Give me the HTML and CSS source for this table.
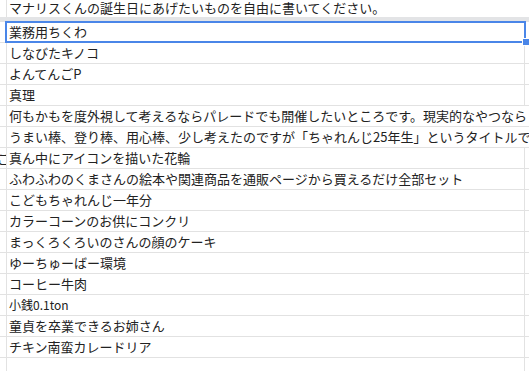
FILE: index.html
```html
<!DOCTYPE html>
<html lang="ja">
<head>
<meta charset="utf-8">
<title>Sheet</title>
<link rel="stylesheet" href="styles.css">
</head>
<body>
<div class="sheet">
  <div class="row head">
    <div class="c0"></div>
    <div class="c1 ov"><span>マナリスくんの誕生日にあげたいものを自由に書いてください。</span></div>
    <div class="c2"></div>
  </div>
  <div class="band"></div>
  <div class="row sel">
    <div class="c0"></div>
    <div class="c1"><span>業務用ちくわ</span></div>
    <div class="c2"></div>
  </div>
  <div class="row"><div class="c0"></div><div class="c1"><span>しなびたキノコ</span></div><div class="c2"></div></div>
  <div class="row"><div class="c0"></div><div class="c1"><span>よんてんごP</span></div><div class="c2"></div></div>
  <div class="row"><div class="c0"></div><div class="c1"><span>真理</span></div><div class="c2"></div></div>
  <div class="row"><div class="c0"></div><div class="c1 ov"><span>何もかもを度外視して考えるならパレードでも開催したいところです。現実的なやつなら</span></div><div class="c2"></div></div>
  <div class="row"><div class="c0"></div><div class="c1 ov"><span>うまい棒、登り棒、用心棒、少し考えたのですが「ちゃれんじ25年生」というタイトルで</span></div><div class="c2"></div></div>
  <div class="row"><div class="c0"><span>ご</span></div><div class="c1"><span>真ん中にアイコンを描いた花輪</span></div><div class="c2"></div></div>
  <div class="row"><div class="c0"></div><div class="c1"><span>ふわふわのくまさんの絵本や関連商品を通販ページから買えるだけ全部セット</span></div><div class="c2"></div></div>
  <div class="row"><div class="c0"></div><div class="c1"><span>こどもちゃれんじ一年分</span></div><div class="c2"></div></div>
  <div class="row"><div class="c0"></div><div class="c1"><span>カラーコーンのお供にコンクリ</span></div><div class="c2"></div></div>
  <div class="row"><div class="c0"></div><div class="c1"><span>まっくろくろいのさんの顔のケーキ</span></div><div class="c2"></div></div>
  <div class="row"><div class="c0"></div><div class="c1"><span>ゆーちゅーばー環境</span></div><div class="c2"></div></div>
  <div class="row"><div class="c0"></div><div class="c1"><span>コーヒー牛肉</span></div><div class="c2"></div></div>
  <div class="row"><div class="c0"></div><div class="c1 small"><span>小銭0.1ton</span></div><div class="c2"></div></div>
  <div class="row"><div class="c0"></div><div class="c1"><span>童貞を卒業できるお姉さん</span></div><div class="c2"></div></div>
  <div class="row"><div class="c0"></div><div class="c1"><span>チキン南蛮カレードリア</span></div><div class="c2"></div></div>
  <div class="row"><div class="c0"></div><div class="c1"></div><div class="c2"></div></div>
</div>
</body>
</html>
```
FILE: styles.css
```css
html, body {
  margin: 0;
  padding: 0;
  background: #ffffff;
  overflow: hidden;
}
.sheet {
  width: 529px;
  height: 371px;
  overflow: hidden;
  font-family: "Noto Sans CJK JP", "Noto Sans", sans-serif;
  font-size: 13px;
  color: #222222;
}
.row {
  display: flex;
  height: 20px;
  border-top: 1px solid #e2e2e2;
}
.row.head {
  height: 17px;
  border-top: none;
}
.band {
  height: 4px;
  background: #e3e4e6;
}
.c0 {
  width: 6px;
  flex: none;
  border-right: 1px solid #e2e2e2;
  overflow: hidden;
  display: flex;
  justify-content: flex-end;
  align-items: center;
  white-space: nowrap;
}
.c0 span {
  flex: none;
  margin-right: -4px;
}
.c1 {
  width: 515px;
  flex: none;
  padding-left: 2px;
  border-right: 1px solid #e2e2e2;
  display: flex;
  align-items: center;
  white-space: nowrap;
  line-height: 20px;
}
.c1.ov {
  border-right-color: transparent;
}
.c1 span {
  flex: none;
}
.head .c1 {
  line-height: 15px;
  padding-bottom: 2px;
}
.c1.small {
  font-size: 12px;
}
.c2 {
  flex: 1;
}
.sel {
  position: relative;
}
.sel::after {
  content: "";
  position: absolute;
  left: 5px;
  top: -1px;
  width: 517px;
  height: 18px;
  border: 2px solid #4a86e8;
}
.sel::before {
  content: "";
  position: absolute;
  left: 522px;
  top: 16px;
  width: 6px;
  height: 6px;
  background: #4a86e8;
  border: 1px solid #ffffff;
  z-index: 2;
}
```
